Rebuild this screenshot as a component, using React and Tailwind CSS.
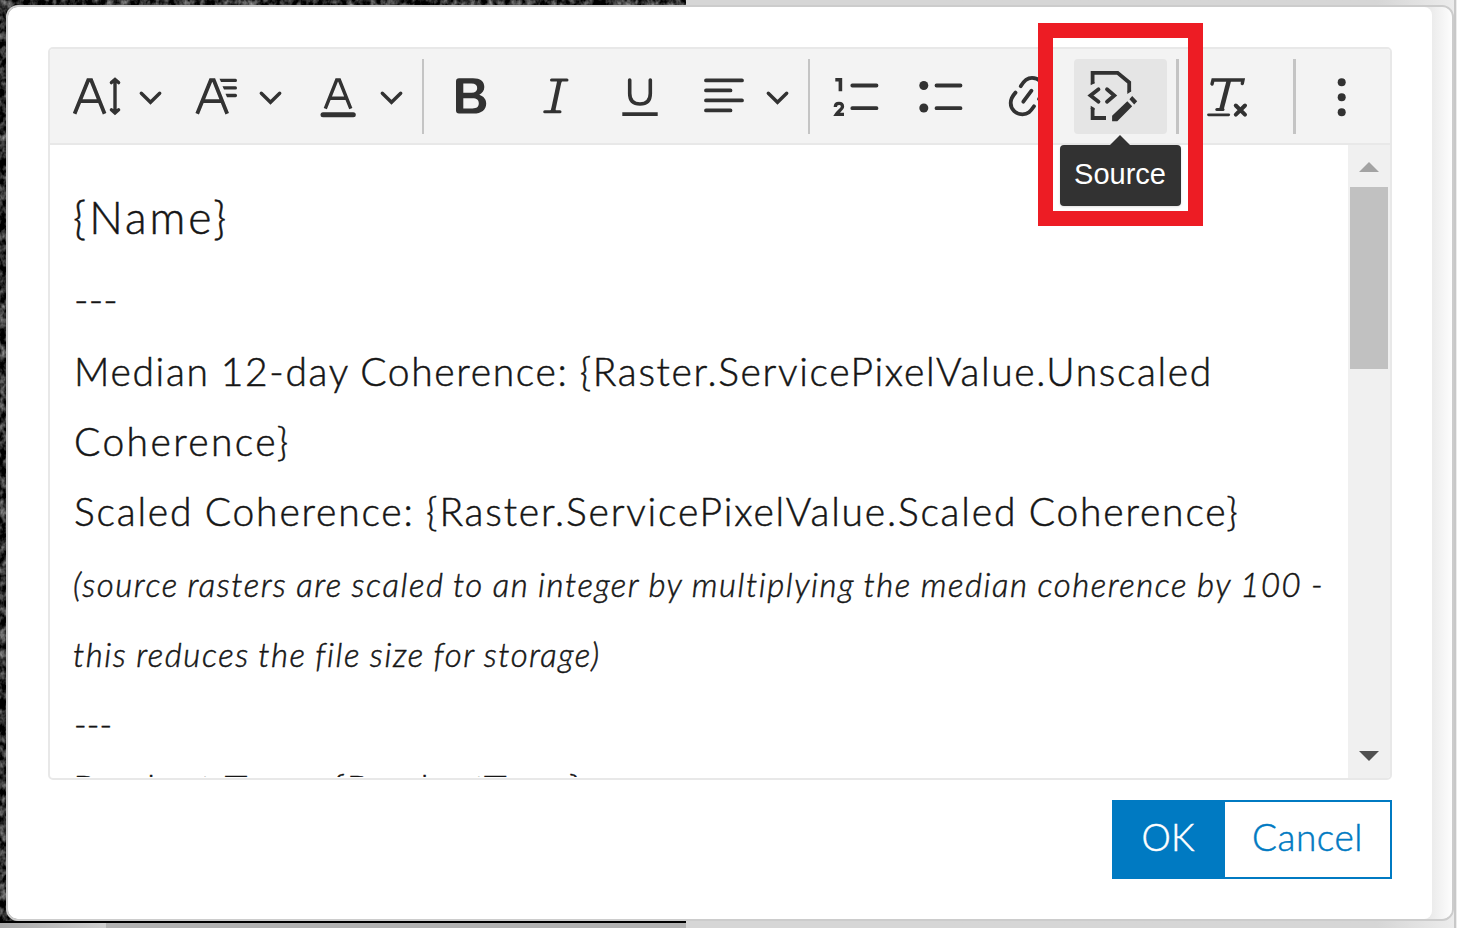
const INK = "#323232";

function Icon({ x, w, children }) {
  return (
    <svg
      className="h-[94px] shrink-0"
      width={w}
      height="94"
      viewBox={`${x} 49 ${w} 94`}
      fill="none"
      stroke={INK}
      strokeWidth="3.4"
      strokeLinecap="round"
      strokeLinejoin="miter"
    >
      {children}
    </svg>
  );
}

function Chevron({ x }) {
  return <path d={`M${x - 9.2} 93.2L${x} 102.3L${x + 9.2} 93.2`} />;
}

function Tool({ label, children }) {
  return (
    <button type="button" aria-label={label} className="flex shrink-0">
      {children}
    </button>
  );
}

function Background() {
  return (
    <div className="absolute inset-0 flex bg-[#d9d9d9]">
      <div className="flex w-[686px] flex-col bg-black">
        <svg className="w-full" width="686" height="921">
          <filter id="grain" x="0" y="0" width="100%" height="100%" colorInterpolationFilters="sRGB">
            <feTurbulence type="fractalNoise" baseFrequency="0.16 0.12" numOctaves="3" seed="8" />
            <feColorMatrix values="1.1 0 0 0 -0.4  1.1 0 0 0 -0.4  1.1 0 0 0 -0.4  0 0 0 0 1" />
          </filter>
          <rect width="686" height="921" filter="url(#grain)" />
        </svg>
        <div className="mt-[2px] flex grow bg-[#b2b2b2]">
          <div className="w-[106px] bg-gradient-to-r from-[#a8a8a8] to-[#cfcfcf]" />
        </div>
      </div>
      <div className="grow bg-gradient-to-r from-[#d6d6d6] from-90% to-[#ececec]" />
      <div className="w-[3px] border-l-2 border-[#c8c8c8] bg-[#ececec]" />
    </div>
  );
}

function Toolbar() {
  return (
    <div className="flex h-[96px] shrink-0 border-b-2 border-[#e8e8e8] bg-[#f3f3f3]">
      <Tool label="Font size">
        <Icon x={50} w={125}>
          <path d="M74.6 113.8L88.2 80.2H91.2L104.6 113.8M79.5 101.2H99.5" strokeWidth="3.8" strokeLinecap="butt" />
          <path d="M115 80V112.5M111.4 82.6L115 79.4L118.6 82.6M111.4 109.8L115 113L118.6 109.8" />
          <Chevron x={150.5} />
        </Icon>
      </Tool>
      <Tool label="Font family">
        <Icon x={175} w={122}>
          <path d="M197.2 113.8L210.8 80.2H213.8L227.2 113.8M202 101.2H222" strokeWidth="3.8" strokeLinecap="butt" />
          <g fill={INK} stroke="none">
            <path d="M219.5 78.7H235.5Q237 78.7 237 80.4T235.5 82.1H221Z" />
            <path d="M222.5 86.2H235.5Q237 86.2 237 87.9T235.5 89.6H224Z" />
            <path d="M225.5 93.8H235.5Q237 93.8 237 95.5T235.5 97.2H227Z" />
          </g>
          <Chevron x={270.5} />
        </Icon>
      </Tool>
      <Tool label="Font color">
        <Icon x={297} w={125}>
          <path d="M325.3 108.7L336.7 80H339.4L350.8 108.7M329.5 98.2H346.5" strokeWidth="3.4" strokeLinecap="butt" />
          <path d="M323 114.8H353.3" strokeWidth="5" />
          <Chevron x={391.5} />
        </Icon>
      </Tool>
      <div className="mt-[10px] h-[75px] w-[2px] shrink-0 bg-[#c4c4c4]" />
      <Tool label="Bold">
        <Icon x={424} w={91}>
          <path
            d="M459 78.2H473C480.5 78.2 484.3 81.5 484.3 87C484.3 90.6 482.5 93 479.3 94.7C483.7 96.2 486.2 99.3 486.2 103.5C486.2 110 481.5 113.6 473.5 113.6H459Q456 113.6 456 110.6V81.2Q456 78.2 459 78.2ZM463.3 83.5V92.8H471.5C475.3 92.8 477.2 91.2 477.2 88.1C477.2 85 475.3 83.5 471.5 83.5ZM463.3 98.2V108.5H472.5C476.7 108.5 478.8 106.7 478.8 103.3C478.8 99.9 476.7 98.2 472.5 98.2Z"
            fill={INK}
            fillRule="evenodd"
            stroke="none"
          />
        </Icon>
      </Tool>
      <Tool label="Italic">
        <Icon x={515} w={81}>
          <path d="M551.5 79.9H567M544.7 111.8H560" strokeWidth="3" />
          <path d="M559.4 81L553 111" strokeWidth="4.4" strokeLinecap="butt" />
          <path d="M556.5 80.5H562.5L560.5 83.5H558ZM549.8 111.5H556.3L554.5 108H552Z" fill={INK} stroke="none" />
        </Icon>
      </Tool>
      <Tool label="Underline">
        <Icon x={596} w={84}>
          <path d="M629.7 80V93.5C629.7 100.5 633.5 104 640 104S650.3 100.5 650.3 93.5V80" strokeWidth="3.6" />
          <path d="M622.3 114.2H657.7" strokeWidth="3.8" strokeLinecap="butt" />
        </Icon>
      </Tool>
      <Tool label="Text alignment">
        <Icon x={680} w={128}>
          <path d="M706 80.4H742M706 90.4H730.5M706 100.4H742M706 110.4H730.5" strokeWidth="3.8" />
          <Chevron x={777.5} />
        </Icon>
      </Tool>
      <div className="mt-[10px] h-[75px] w-[2px] shrink-0 bg-[#c4c4c4]" />
      <Tool label="Numbered list">
        <Icon x={810} w={90}>
          <path d="M835.3 79.8H840.4V91.3" strokeWidth="3.6" strokeLinecap="butt" />
          <path d="M835.3 107C835.3 103.8 837.2 103.4 839 103.4C841.5 103.4 842.5 104.8 842.5 106.5C842.5 109 838.5 111 836.3 114.4H844" strokeWidth="3.3" strokeLinecap="butt" />
          <path d="M852.3 85.5H876.5M852.3 108.2H876.5" strokeWidth="3.8" />
        </Icon>
      </Tool>
      <Tool label="Bulleted list">
        <Icon x={900} w={85}>
          <circle cx="923.8" cy="85.5" r="4.5" fill={INK} stroke="none" />
          <circle cx="923.8" cy="108" r="4.5" fill={INK} stroke="none" />
          <path d="M936.5 85.5H960.5M936.5 108.2H960.5" strokeWidth="3.8" />
        </Icon>
      </Tool>
      <Tool label="Link">
        <Icon x={985} w={89}>
          <g strokeWidth="3.8">
            <path d="M1015.5 92.6C1011.5 97 1010.7 99.5 1010.7 103C1010.7 109.5 1016 114.3 1022.5 114.3C1028 114.3 1030.5 111.5 1034 106.3" />
            <path d="M1020.7 86.2C1024 80.5 1027.5 77.8 1032 77.8C1039 77.8 1043.5 83 1043.5 89C1043.5 93 1042 95.5 1039 99" />
            <path d="M1023.3 101.7L1031.5 90.7" />
          </g>
        </Icon>
      </Tool>
      <button type="button" aria-label="Source" className="mt-[10px] flex h-[75px] w-[93px] shrink-0 overflow-hidden rounded-[4px] bg-[#e5e5e5]">
        <svg width="93" height="75" viewBox="1074 59 93 75" fill="none" stroke={INK} strokeWidth="3.8">
          <path d="M1092.6 83.5V72.8H1117.6L1129.2 82.5V91.5M1092.6 108V118H1106" />
          <path d="M1090.7 83V85.3L1094.5 83.2V82ZM1127.3 91V94L1131.1 91.5V90ZM1090.7 109V105.8L1094.5 108V110Z" fill={INK} stroke="none" />
          <path d="M1098.5 89.3L1090.5 95.5L1098.5 101.7M1107 89.3L1114.3 95.5L1107 101.7" strokeLinecap="round" />
          <path d="M1112.1 121.2V115.7L1127.3 101.3L1132.2 106.2L1117.3 121.2ZM1129.4 99.3L1132.2 96L1137.2 101.3L1134.2 104.5Z" fill={INK} stroke="none" />
        </svg>
      </button>
      <div className="mt-[10px] ml-[9px] h-[75px] w-[3px] shrink-0 bg-[#c4c4c4]" />
      <Tool label="Remove format">
        <Icon x={1179} w={114}>
          <path d="M1212 84L1213 80H1243L1242.3 83.5" strokeWidth="3.4" />
          <path d="M1229 80L1221.5 109" strokeWidth="4.6" strokeLinecap="butt" />
          <path d="M1216.8 109.6H1223" strokeWidth="3" />
          <path d="M1208.5 114.8H1228.7" strokeWidth="2.8" />
          <path d="M1235.8 105.5L1245 114.7M1245 105.5L1235.8 114.7" strokeWidth="4" />
        </Icon>
      </Tool>
      <div className="mt-[10px] h-[75px] w-[3px] shrink-0 bg-[#c4c4c4]" />
      <Tool label="More options">
        <Icon x={1296} w={94}>
          <g fill={INK} stroke="none">
            <circle cx="1341.7" cy="82.2" r="4" />
            <circle cx="1341.7" cy="97.2" r="4" />
            <circle cx="1341.7" cy="112.2" r="4" />
          </g>
        </Icon>
      </Tool>
    </div>
  );
}

function Content() {
  return (
    <div className="h-[632px] min-w-0 grow overflow-hidden pl-[25px] text-[39px] leading-[70px] font-light whitespace-nowrap text-[#151515] [-webkit-text-stroke:0.5px_#151515]">
      <p className="mt-[37px] -ml-[2px] text-[44.5px] tracking-[3px]">{"{Name}"}</p>
      <p className="mt-[12px] mb-[2px] -ml-px tracking-[0.2px]">---</p>
      <p className="-ml-px tracking-[1.65px] [word-spacing:-1px]">{"Median 12-day Coherence: {Raster.ServicePixelValue.Unscaled"}</p>
      <p className="-ml-px tracking-[2.4px]">{"Coherence}"}</p>
      <p className="-ml-px tracking-[1.82px] [word-spacing:-1px]">{"Scaled Coherence: {Raster.ServicePixelValue.Scaled Coherence}"}</p>
      <p className="mt-[3px] -ml-[2px] text-[33px] tracking-[1.54px] italic [word-spacing:-1px]">
        (source rasters are scaled to an integer by multiplying the median coherence by 100 -
      </p>
      <p className="-ml-[2px] text-[33px] tracking-[1.54px] italic [word-spacing:-1px]">this reduces the file size for storage)</p>
      <p className="-ml-px text-[34px] tracking-[0.2px]">---</p>
      <p className="-mt-[5px] -ml-[2px] tracking-[1.4px]">{"Product Type: {ProductType}"}</p>
    </div>
  );
}

function Scrollbar() {
  return (
    <div className="flex w-[42px] shrink-0 flex-col items-center bg-[#f0f0f0]">
      <svg className="mt-[17px]" width="20" height="10" viewBox="0 0 20 10">
        <path d="M10 0L20 10H0Z" fill="#a3a3a3" />
      </svg>
      <div className="mt-[15px] h-[182px] w-[38px] bg-[#c1c1c1]" />
      <svg className="mt-auto mb-[17px]" width="20" height="10" viewBox="0 0 20 10">
        <path d="M0 0H20L10 10Z" fill="#505050" />
      </svg>
    </div>
  );
}

export default function App() {
  return (
    <div className="relative h-[928px] w-[1457px] overflow-hidden pt-[5px] pl-[6px] font-['Lato',sans-serif]">
      <Background />
      <div className="relative h-[916px] w-[1448px] overflow-hidden rounded-[12px] border-2 border-[#cccccc] bg-[#fcfcfc]">
        <div className="flex h-full w-full bg-gradient-to-r from-[#e9e9e9] from-[98.4%] to-[#fdfdfd]">
          <div className="flex w-[1424px] flex-col rounded-r-[8px] bg-white pt-[40px] pr-[40px] pl-[40px]">
            <div className="flex h-[733px] w-[1344px] shrink-0 flex-col overflow-hidden rounded-[5px] border-2 border-[#e8e8e8]">
              <Toolbar />
              <div className="flex min-h-0 grow">
                <Content />
                <Scrollbar />
              </div>
            </div>
            <div className="mt-[20px] flex h-[79px] w-[280px] self-end border-2 border-[#007ac2] text-[37px] leading-[70px] font-light">
              <button type="button" className="w-[111px] bg-[#007ac2] pr-[3px] pb-[9px] text-white [-webkit-text-stroke:0.5px_white]">
                OK
              </button>
              <button type="button" className="grow bg-white pb-[9px] tracking-[0.5px] text-[#007ac2] [-webkit-text-stroke:0.5px_#007ac2]">
                Cancel
              </button>
            </div>
          </div>
        </div>
      </div>
      <div className="absolute top-[23px] left-[1038px] h-[203px] w-[165px] border-[15px] border-[#ed1c24]" />
      <div className="absolute top-[135px] left-[1060px] flex w-[121px] flex-col">
        <svg className="ml-[50px]" width="20" height="10" viewBox="0 0 20 10">
          <path d="M10 0L20 10H0Z" fill="#323232" />
        </svg>
        <div className="h-[61px] w-full rounded-[4px] bg-[#323232] pr-px text-center font-['Liberation_Sans',sans-serif] text-[29px] leading-[58px] text-white shadow-sm">
          Source
        </div>
      </div>
    </div>
  );
}
